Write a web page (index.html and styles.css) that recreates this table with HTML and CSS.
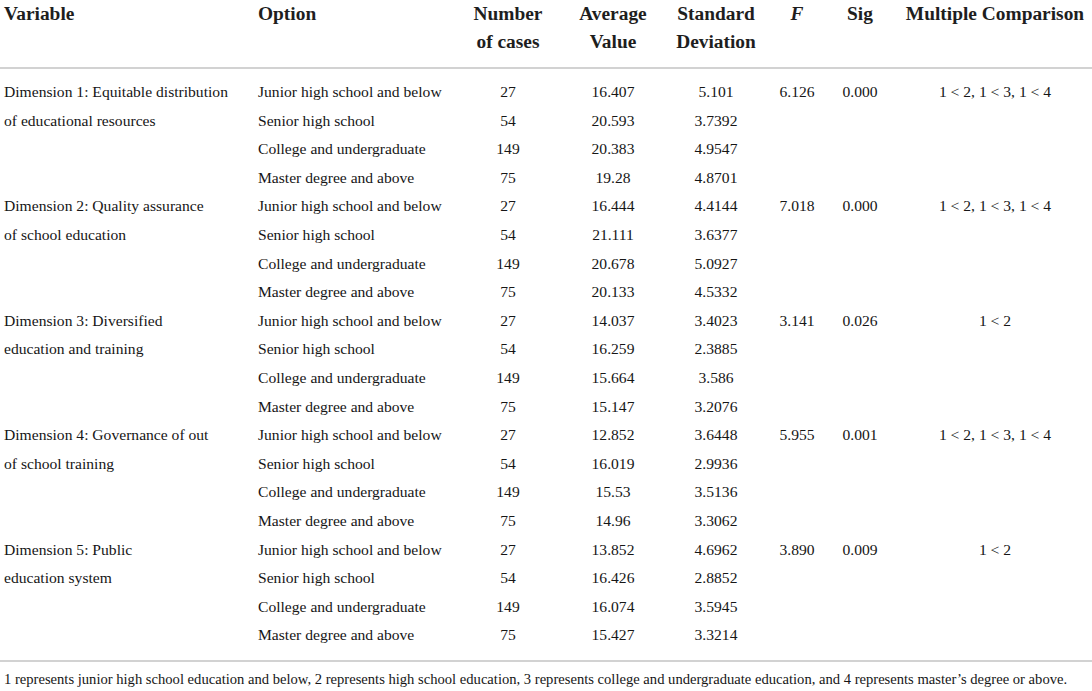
FILE: index.html
```html
<!DOCTYPE html>
<html>
<head>
<meta charset="utf-8">
<link rel="stylesheet" href="styles.css">
</head>
<body>
<table class="tbl">
<colgroup>
<col class="c-var"><col class="c-opt"><col class="c-num"><col class="c-avg"><col class="c-sd"><col class="c-f"><col class="c-sig"><col class="c-mc">
</colgroup>
<thead>
<tr>
<th class="left pad-l">Variable</th>
<th class="left">Option</th>
<th>Number<br>of cases</th>
<th>Average<br>Value</th>
<th>Standard<br>Deviation</th>
<th><i>F</i></th>
<th>Sig</th>
<th class="mc">Multiple Comparison</th>
</tr>
</thead>
<tbody>
<tr><td rowspan="4" class="var">Dimension 1: Equitable distribution<br>of educational resources</td><td class="opt">Junior high school and below</td><td>27</td><td>16.407</td><td>5.101</td><td>6.126</td><td>0.000</td><td class="mc">1 &lt; 2, 1 &lt; 3, 1 &lt; 4</td></tr>
<tr><td class="opt">Senior high school</td><td>54</td><td>20.593</td><td>3.7392</td><td></td><td></td><td class="mc"></td></tr>
<tr><td class="opt">College and undergraduate</td><td>149</td><td>20.383</td><td>4.9547</td><td></td><td></td><td class="mc"></td></tr>
<tr><td class="opt">Master degree and above</td><td>75</td><td>19.28</td><td>4.8701</td><td></td><td></td><td class="mc"></td></tr>
<tr><td rowspan="4" class="var">Dimension 2: Quality assurance<br>of school education</td><td class="opt">Junior high school and below</td><td>27</td><td>16.444</td><td>4.4144</td><td>7.018</td><td>0.000</td><td class="mc">1 &lt; 2, 1 &lt; 3, 1 &lt; 4</td></tr>
<tr><td class="opt">Senior high school</td><td>54</td><td>21.111</td><td>3.6377</td><td></td><td></td><td class="mc"></td></tr>
<tr><td class="opt">College and undergraduate</td><td>149</td><td>20.678</td><td>5.0927</td><td></td><td></td><td class="mc"></td></tr>
<tr><td class="opt">Master degree and above</td><td>75</td><td>20.133</td><td>4.5332</td><td></td><td></td><td class="mc"></td></tr>
<tr><td rowspan="4" class="var">Dimension 3: Diversified<br>education and training</td><td class="opt">Junior high school and below</td><td>27</td><td>14.037</td><td>3.4023</td><td>3.141</td><td>0.026</td><td class="mc">1 &lt; 2</td></tr>
<tr><td class="opt">Senior high school</td><td>54</td><td>16.259</td><td>2.3885</td><td></td><td></td><td class="mc"></td></tr>
<tr><td class="opt">College and undergraduate</td><td>149</td><td>15.664</td><td>3.586</td><td></td><td></td><td class="mc"></td></tr>
<tr><td class="opt">Master degree and above</td><td>75</td><td>15.147</td><td>3.2076</td><td></td><td></td><td class="mc"></td></tr>
<tr><td rowspan="4" class="var">Dimension 4: Governance of out<br>of school training</td><td class="opt">Junior high school and below</td><td>27</td><td>12.852</td><td>3.6448</td><td>5.955</td><td>0.001</td><td class="mc">1 &lt; 2, 1 &lt; 3, 1 &lt; 4</td></tr>
<tr><td class="opt">Senior high school</td><td>54</td><td>16.019</td><td>2.9936</td><td></td><td></td><td class="mc"></td></tr>
<tr><td class="opt">College and undergraduate</td><td>149</td><td>15.53</td><td>3.5136</td><td></td><td></td><td class="mc"></td></tr>
<tr><td class="opt">Master degree and above</td><td>75</td><td>14.96</td><td>3.3062</td><td></td><td></td><td class="mc"></td></tr>
<tr><td rowspan="4" class="var">Dimension 5: Public<br>education system</td><td class="opt">Junior high school and below</td><td>27</td><td>13.852</td><td>4.6962</td><td>3.890</td><td>0.009</td><td class="mc">1 &lt; 2</td></tr>
<tr><td class="opt">Senior high school</td><td>54</td><td>16.426</td><td>2.8852</td><td></td><td></td><td class="mc"></td></tr>
<tr><td class="opt">College and undergraduate</td><td>149</td><td>16.074</td><td>3.5945</td><td></td><td></td><td class="mc"></td></tr>
<tr class="last"><td class="opt">Master degree and above</td><td>75</td><td>15.427</td><td>3.3214</td><td></td><td></td><td class="mc"></td></tr>
</tbody>
</table>
<p class="note">1 represents junior high school education and below, 2 represents high school education, 3 represents college and undergraduate education, and 4 represents master’s degree or above.</p>
</body>
</html>
```

FILE: styles.css
```css
html, body {
  margin: 0;
  padding: 0;
  background: #ffffff;
}
body {
  font-family: "Liberation Serif", "Times New Roman", serif;
  color: #161616;
  width: 1092px;
}
.tbl {
  width: 1092px;
  table-layout: fixed;
  border-collapse: collapse;
}
.c-var { width: 258px; }
.c-opt { width: 200px; }
.c-num { width: 100px; }
.c-avg { width: 110px; }
.c-sd { width: 96px; }
.c-f { width: 66px; }
.c-sig { width: 60px; }
.c-mc { width: 202px; }

.tbl th {
  font-size: 19.4px;
  font-weight: 700;
  line-height: 28px;
  text-align: center;
  vertical-align: top;
  padding: 0 0 11px 0;
  border-bottom: 2px solid #d2d2d2;
  white-space: nowrap;
  color: #1e1e1e;
}
.tbl th.left { text-align: left; }
.tbl th.pad-l { padding-left: 4px; }
.tbl .mc { padding-left: 8px; }

.tbl tbody {
  border-bottom: 2px solid #d2d2d2;
}
.tbl td {
  font-size: 15.6px;
  line-height: 28.6px;
  height: 28.6px;
  padding: 0;
  text-align: center;
  vertical-align: top;
  white-space: nowrap;
}
.tbl td.var {
  text-align: left;
  padding-left: 4px;
}
.tbl td.opt { text-align: left; }
.tbl tbody tr:first-child td { padding-top: 9px; }
.tbl tbody tr.last td { padding-bottom: 10px; }
.note {
  margin: 0;
  padding: 5px 0 0 4px;
  font-size: 14.6px;
  line-height: 24px;
  white-space: nowrap;
}
```
